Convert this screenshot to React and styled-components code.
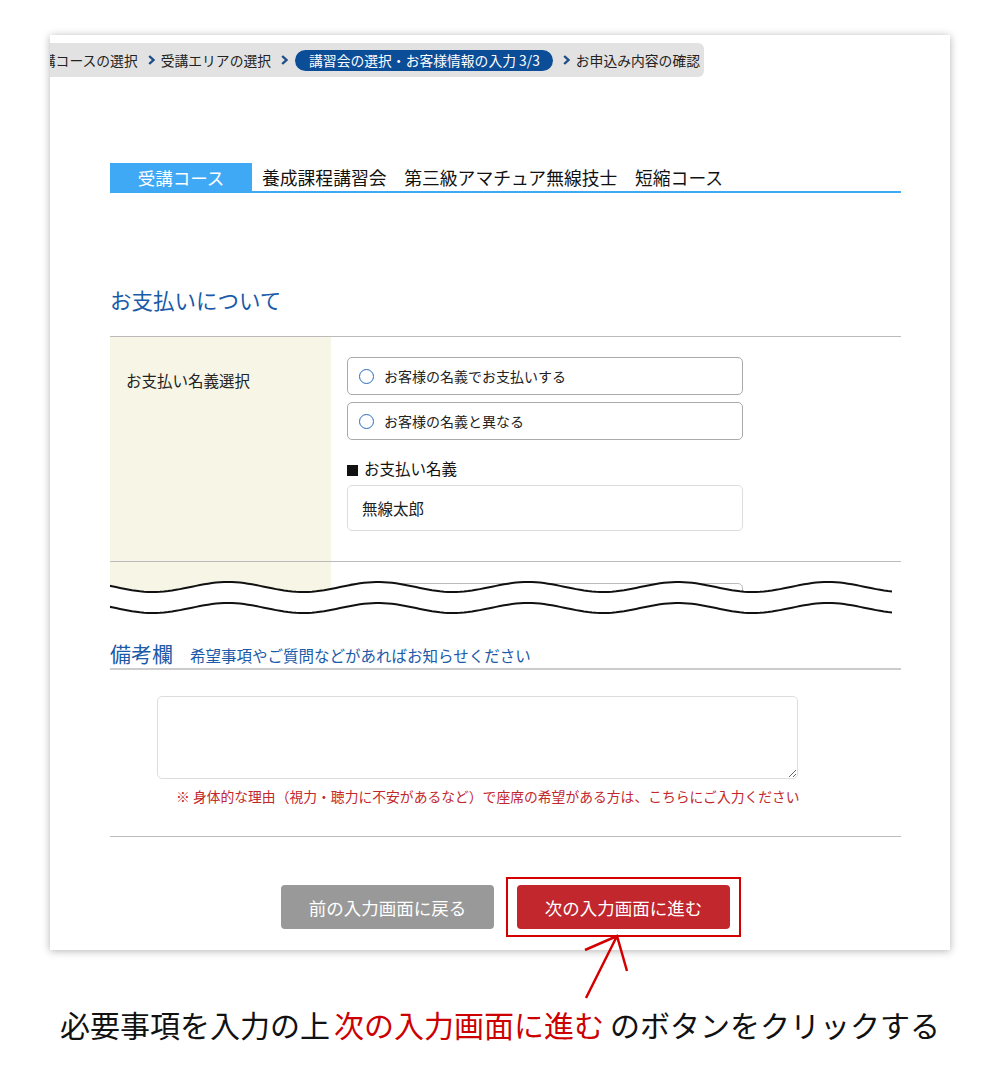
import React from "react";
import styled, { createGlobalStyle } from "styled-components";

const GlobalStyle = createGlobalStyle`
  body {
    margin: 0;
    background: #fff;
    font-family: "Noto Sans CJK JP", "Noto Sans", sans-serif;
    color: #222;
  }
`;

const BLUE = "#1a5aa8";
const SKY = "#3fa9f5";
const RED = "#c1272d";

// sine wave for the "page break" marks
const wave = (center, width) => {
  let d = "";
  for (let x = 0; x <= width; x += 4) {
    const y = center + 5 * Math.sin((2 * Math.PI * (x + 108 - 115.5)) / 150);
    d += (x === 0 ? "M" : "L") + x + " " + y.toFixed(2) + " ";
  }
  return d;
};

const PageWrap = styled.div`
  position: relative;
  padding: 35px 50px 0;
`;

const Card = styled.div`
  width: 900px;
  background: #fff;
  box-shadow: 0 1px 8px rgba(0, 0, 0, 0.3);
`;

const Crumbs = styled.nav`
  display: inline-flex;
  align-items: center;
  height: 34px;
  margin-top: 8px;
  padding-right: 4px;
  background: #e2e2e2;
  border-radius: 0 6px 6px 0;
  overflow: hidden;
  font-size: 13.8px;
  white-space: nowrap;
  color: #222;
`;

const Crumb = styled.span`
  line-height: 20px;
  margin-left: ${(p) => (p.$clip ? "-22px" : "0")};
`;

const ActiveCrumb = styled.span`
  margin-left: 1px;
  padding: 0 13px 0 14px;
  height: 21px;
  line-height: 21px;
  border-radius: 11px;
  background: #0c4d98;
  color: #fff;
`;

const Sep = styled.svg`
  width: 7px;
  height: 10px;
  margin: 0 6px 0 10px;
  flex: none;
`;

const Chevron = () => (
  <Sep viewBox="0 0 7 10">
    <path d="M1.2 1 L5.4 5 L1.2 9" fill="none" stroke="#1f4e89" strokeWidth="2.4" />
  </Sep>
);

const Content = styled.div`
  padding: 0 49px 21px 60px;
`;

const CourseRow = styled.div`
  display: flex;
  margin-top: 86px;
  border-bottom: 2px solid ${SKY};
`;

const CourseLabel = styled.div`
  width: 142px;
  height: 28px;
  display: flex;
  align-items: center;
  justify-content: center;
  background: ${SKY};
  color: #fff;
  font-size: 17.5px;
`;

const CourseName = styled.div`
  margin-left: 10px;
  font-size: 17.8px;
  line-height: 28px;
  color: #111;
`;

const SectionTitle = styled.h2`
  margin: 91px 0 20px;
  font-size: 21.5px;
  font-weight: 400;
  line-height: 32px;
  color: ${BLUE};
`;

const FormRow = styled.div`
  display: grid;
  grid-template-columns: 221px 1fr;
  border-top: 1px solid #bbb;
  border-bottom: 1px solid #bbb;
`;

const RowLabel = styled.div`
  background: #f6f5e6;
  padding: 32px 0 0 16px;
  font-size: 15.5px;
  line-height: 22px;
  color: #222;
`;

const RowBody = styled.div`
  padding: 20px 0 30px 16px;
`;

const RadioBox = styled.label`
  display: flex;
  align-items: center;
  width: 396px;
  height: 38px;
  box-sizing: border-box;
  border: 1px solid #aaa;
  border-radius: 5px;
  padding-left: 11px;
  font-size: 14px;
  color: #222;
  & + & {
    margin-top: 7px;
  }
`;

const RadioDot = styled.span`
  width: 15px;
  height: 15px;
  box-sizing: border-box;
  border: 1.5px solid #2a6bbf;
  border-radius: 50%;
  margin-right: 10px;
`;

const FieldLabel = styled.div`
  margin-top: 17px;
  font-size: 15.5px;
  line-height: 22px;
  color: #111;
  &::before {
    content: "";
    display: inline-block;
    width: 11px;
    height: 11px;
    background: #111;
    margin-right: 6px;
    vertical-align: -1px;
  }
`;

const TextInput = styled.div`
  margin-top: 6px;
  width: 396px;
  height: 46px;
  box-sizing: border-box;
  border: 1px solid #ddd;
  border-radius: 5px;
  padding-left: 14px;
  display: flex;
  align-items: center;
  font-size: 15.5px;
  color: #222;
`;

const Break = styled.div`
  position: relative;
  height: 60px;
  overflow: hidden;
  display: grid;
  grid-template-columns: 221px 1fr;
`;

const BreakCream = styled.div`
  background: #f6f5e6;
`;

const BreakField = styled.div`
  margin: 21px 0 0 16px;
  width: 396px;
  height: 30px;
  box-sizing: border-box;
  border: 1px solid #bbb;
  border-radius: 5px;
`;

const WaveMark = styled.svg`
  position: absolute;
  left: -2px;
  top: 0;
  width: 784px;
  height: 60px;
`;

const RemarksTitle = styled.div`
  display: flex;
  align-items: baseline;
  margin-top: 18px;
  padding-bottom: 2px;
  border-bottom: 2px solid #ccc;
  color: ${BLUE};
`;

const RemarksMain = styled.span`
  font-size: 21px;
  line-height: 26px;
`;

const RemarksSub = styled.span`
  margin-left: 17px;
  font-size: 15.5px;
`;

const Remarks = styled.textarea`
  display: block;
  margin: 26px 0 0 47px;
  width: 641px;
  height: 83px;
  box-sizing: border-box;
  border: 1px solid #ddd;
  border-radius: 5px;
  font-family: inherit;
  outline: none;
`;

const Note = styled.p`
  margin: 7px 0 0;
  padding-left: 66px;
  font-size: 13.8px;
  line-height: 20px;
  color: ${RED};
  white-space: nowrap;
`;

const Divider = styled.hr`
  margin: 30px 0 0;
  border: none;
  border-top: 1px solid #bbb;
`;

const Actions = styled.div`
  display: flex;
  justify-content: center;
  gap: 23px;
  margin-top: 48px;
`;

const Button = styled.button`
  position: relative;
  width: 213px;
  height: 44px;
  border: none;
  border-radius: 4px;
  background: ${(p) => (p.$primary ? RED : "#999")};
  color: #fff;
  font-family: inherit;
  font-size: 17.5px;
`;

const Highlight = styled.span`
  position: absolute;
  inset: -8px -11px;
  border: 2px solid #d40000;
  pointer-events: none;
`;

const Arrow = styled.svg`
  position: absolute;
  left: 580px;
  top: 930px;
  width: 55px;
  height: 75px;
`;

const Caption = styled.p`
  margin: 54px 0 0;
  text-align: center;
  font-size: 30px;
  font-weight: 400;
  line-height: 40px;
  color: #111;
  white-space: nowrap;
`;

const CaptionEm = styled.span`
  margin: 0 6px 0 4px;
  padding-bottom: 3px;
  color: #cc0000;
  border-bottom: 3px solid #cc0000;
`;

export default function App() {
  return (
    <PageWrap>
      <GlobalStyle />
      <Card>
        <Crumbs>
          <Crumb $clip>受講コースの選択</Crumb>
          <Chevron />
          <Crumb>受講エリアの選択</Crumb>
          <Chevron />
          <ActiveCrumb>講習会の選択・お客様情報の入力 3/3</ActiveCrumb>
          <Chevron />
          <Crumb>お申込み内容の確認</Crumb>
        </Crumbs>

        <Content>
          <CourseRow>
            <CourseLabel>受講コース</CourseLabel>
            <CourseName>養成課程講習会　第三級アマチュア無線技士　短縮コース</CourseName>
          </CourseRow>

          <SectionTitle>お支払いについて</SectionTitle>

          <FormRow>
            <RowLabel>お支払い名義選択</RowLabel>
            <RowBody>
              <RadioBox>
                <RadioDot />
                お客様の名義でお支払いする
              </RadioBox>
              <RadioBox>
                <RadioDot />
                お客様の名義と異なる
              </RadioBox>
              <FieldLabel>お支払い名義</FieldLabel>
              <TextInput>無線太郎</TextInput>
            </RowBody>
          </FormRow>

          <Break>
            <BreakCream />
            <div>
              <BreakField />
            </div>
            <WaveMark viewBox="0 0 784 60">
              <path d={wave(25, 784) + " L784 60 L0 60 Z"} fill="#fff" />
              <path d={wave(25, 784)} fill="none" stroke="#111" strokeWidth="2" />
              <path d={wave(46, 784)} fill="none" stroke="#111" strokeWidth="2" />
            </WaveMark>
          </Break>

          <RemarksTitle>
            <RemarksMain>備考欄</RemarksMain>
            <RemarksSub>希望事項やご質問などがあればお知らせください</RemarksSub>
          </RemarksTitle>
          <Remarks />
          <Note>※ 身体的な理由（視力・聴力に不安があるなど）で座席の希望がある方は、こちらにご入力ください</Note>
          <Divider />

          <Actions>
            <Button>前の入力画面に戻る</Button>
            <Button $primary>
              次の入力画面に進む
              <Highlight />
            </Button>
          </Actions>
        </Content>
      </Card>

      <Arrow viewBox="0 0 55 75">
        <path d="M5 20 L37 6 L47 41 M37 6 L6 68" fill="none" stroke="#d40000" strokeWidth="2.5" />
      </Arrow>

      <Caption>
        必要事項を入力の上<CaptionEm>次の入力画面に進む</CaptionEm>のボタンをクリックする
      </Caption>
    </PageWrap>
  );
}
